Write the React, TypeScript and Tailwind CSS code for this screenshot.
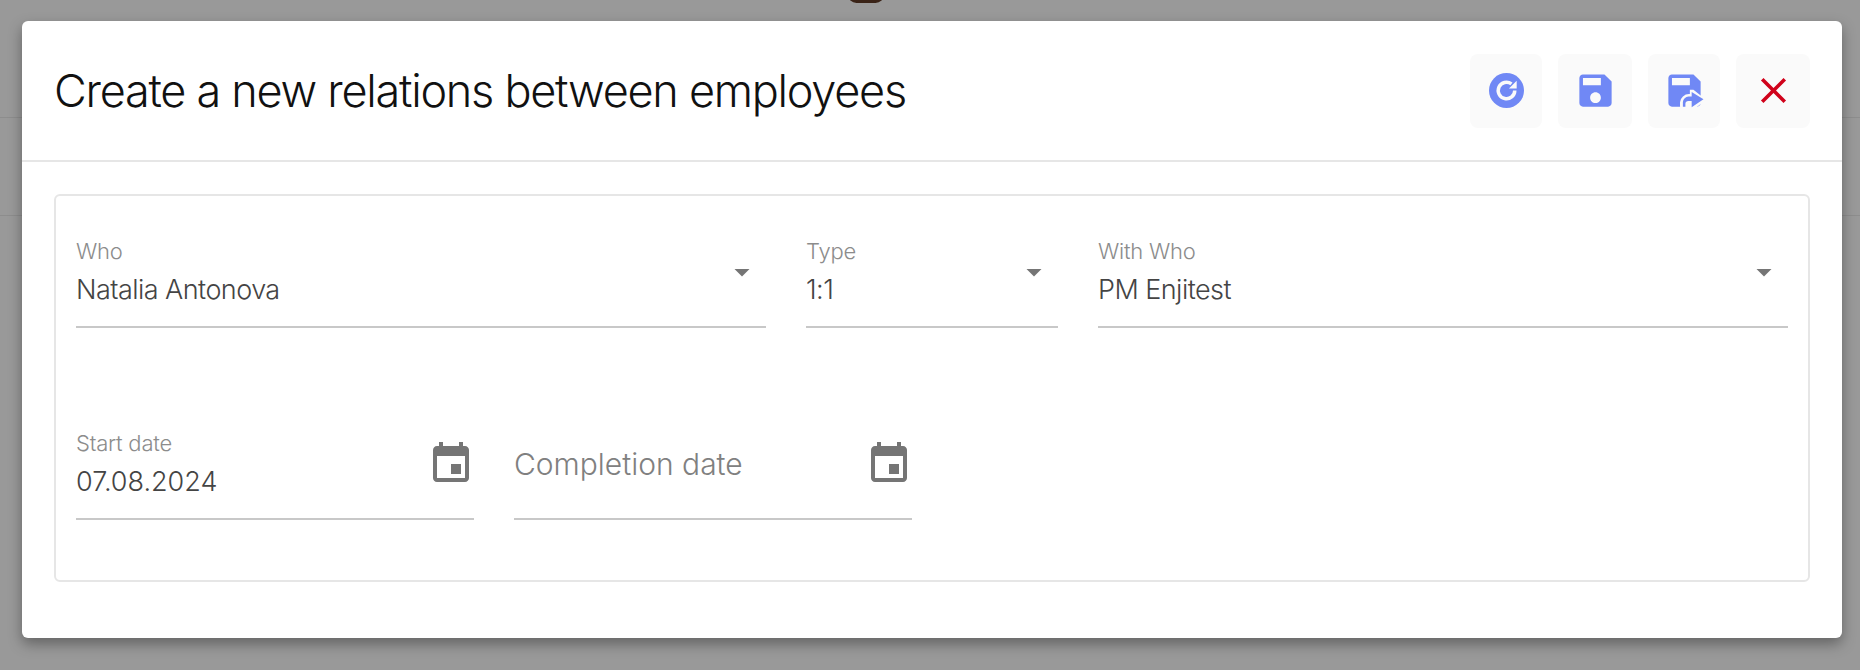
import React from "react";

function RefreshIcon() {
  return (
    <svg viewBox="0 0 36 36" className="w-[35px] h-[35px]">
      <circle cx="18" cy="18" r="18" fill="#7088f5" />
      <path d="M26.5 18a8.5 8.5 0 1 1-3.4-6.8" fill="none" stroke="#fafafa" strokeWidth="3.6" />
      <path d="M20.5 16L28.5 16L28.5 8z" fill="#fafafa" />
    </svg>
  );
}

function SaveIcon() {
  return (
    <svg viewBox="0 0 24 24" className="w-[43px] h-[43px]" fill="#7088f5">
      <path d="M17 3H5c-1.11 0-2 .9-2 2v14c0 1.1.89 2 2 2h14c1.1 0 2-.9 2-2V7l-4-4zm-5 16c-1.66 0-3-1.34-3-3s1.34-3 3-3 3 1.34 3 3-1.34 3-3 3zm3-10H5V5h10v4z" />
    </svg>
  );
}

function SaveExitIcon() {
  return (
    <svg viewBox="0 0 24 24" className="w-[43px] h-[43px]">
      <path
        fill="#7088f5"
        d="M17 3H5c-1.11 0-2 .9-2 2v14c0 1.1.89 2 2 2h14c1.1 0 2-.9 2-2V7l-4-4zm-2 6H5V5h10v4z"
      />
      {/* light cut-out round the arrow */}
      <path fill="#fafafa" d="M9.5 21v-2.5a5 5 0 0 1 5-4.5h.5v-2.4h2l7 5.6-7 5.6h-5.5z" />
      <path fill="#7088f5" d="M16 17.8h-1.8a1.7 1.7 0 0 0-1.7 1.6V21h-1.4v-2.6a3.2 3.2 0 0 1 3.2-3H16v-2.6l6.6 4.1-6.6 4.4z" />
    </svg>
  );
}

function CloseIcon() {
  return (
    <svg viewBox="0 0 24 24" className="w-[43px] h-[43px]" fill="#d0021b">
      <path d="M19 6.41L17.59 5 12 10.59 6.41 5 5 6.41 10.59 12 5 17.59 6.41 19 12 13.41 17.59 19 19 17.59 13.41 12z" />
    </svg>
  );
}

function CalendarIcon() {
  return (
    <svg viewBox="0 0 24 24" className="w-12 h-12 shrink-0" fill="#757575">
      <path d="M17 12h-5v5h5v-5zM16 1v2H8V1H6v2H5c-1.11 0-1.99.9-1.99 2L3 19c0 1.1.89 2 2 2h14c1.1 0 2-.9 2-2V5c0-1.1-.9-2-2-2h-1V1h-2zm3 18H5V8h14v11z" />
    </svg>
  );
}

function ArrowDown() {
  return (
    <svg viewBox="0 0 24 24" className="w-9 h-9" fill="#757575">
      <path d="M7 10l5 5 5-5z" />
    </svg>
  );
}

function SelectField({ label, value, className }: { label: string; value: string; className: string }) {
  return (
    <div className={`relative h-[99px] border-b-2 border-[#c8c8c8] ${className}`}>
      <div className="text-[22px] leading-6 font-light text-[#8c8c8c] tracking-[-0.01em] pt-[10px]">{label}</div>
      <div className="text-[27px] leading-8 font-light text-[#444] tracking-[-0.02em] mt-[11px]">{value}</div>
      <div className="absolute right-[6px] top-[25px]">
        <ArrowDown />
      </div>
    </div>
  );
}

const actions = [
  { id: "reload", icon: <RefreshIcon />, width: "w-[72px]" },
  { id: "save", icon: <SaveIcon />, width: "w-[74px]" },
  { id: "saveExit", icon: <SaveExitIcon />, width: "w-[72px]" },
  { id: "close", icon: <CloseIcon />, width: "w-[74px]" },
];

export default function App() {
  return (
    <div className="relative h-[670px] w-[1860px] overflow-hidden bg-[#999999] font-['Inter',sans-serif]">
      {/* page behind the dialog */}
      <div className="absolute left-[848px] top-[-14px] w-[36px] h-[17px] rounded-full bg-[#3a2317]" />
      <div className="absolute left-0 right-0 top-[117px] h-px bg-[#8d8d8d]" />
      <div className="absolute left-0 right-0 top-[215px] h-px bg-[#8d8d8d]" />

      {/* dialog */}
      <div className="absolute left-[22px] top-[21px] w-[1820px] h-[617px] rounded-[6px] bg-white shadow-[0_6px_14px_rgba(0,0,0,0.35)] flex flex-col">
        <div className="h-[141px] border-b-2 border-[#e6e6e6] flex items-center justify-between pl-[32px] pr-[32px] shrink-0">
          <h1 className="text-[45px] leading-none font-light text-[#111] tracking-[-0.028em]">
            Create a new relations between employees
          </h1>
          <div className="flex gap-[16px]">
            {actions.map((a) => (
              <button
                key={a.id}
                className={`${a.width} h-[74px] rounded-[8px] bg-[#fafafa] flex items-center justify-center`}
              >
                {a.icon}
              </button>
            ))}
          </div>
        </div>

        <div className="flex-1 px-[32px] pt-[32px] pb-[56px]">
          <div className="h-full rounded-[6px] border-2 border-[#e6e6e6] px-[20px] pt-[33px]">
            <div className="flex gap-[40px]">
              <SelectField label="Who" value="Natalia Antonova" className="w-[690px]" />
              <SelectField label="Type" value="1:1" className="w-[252px]" />
              <SelectField label="With Who" value="PM Enjitest" className="w-[690px]" />
            </div>
            <div className="flex gap-[40px] mt-[93px]">
              <div className="relative h-[99px] w-[398px] border-b-2 border-[#c8c8c8]">
                <div className="text-[22px] leading-6 font-light text-[#8c8c8c] tracking-[-0.01em] pt-[10px]">Start date</div>
                <div className="text-[27px] leading-8 font-light text-[#444] mt-[11px]">07.08.2024</div>
                <div className="absolute right-[-1px] top-[19px]">
                  <CalendarIcon />
                </div>
              </div>
              <div className="relative h-[99px] w-[398px] border-b-2 border-[#c8c8c8]">
                <div className="text-[30px] leading-8 font-light text-[#808080] pt-[27px]">Completion date</div>
                <div className="absolute right-[-1px] top-[19px]">
                  <CalendarIcon />
                </div>
              </div>
            </div>
          </div>
        </div>
      </div>
    </div>
  );
}
